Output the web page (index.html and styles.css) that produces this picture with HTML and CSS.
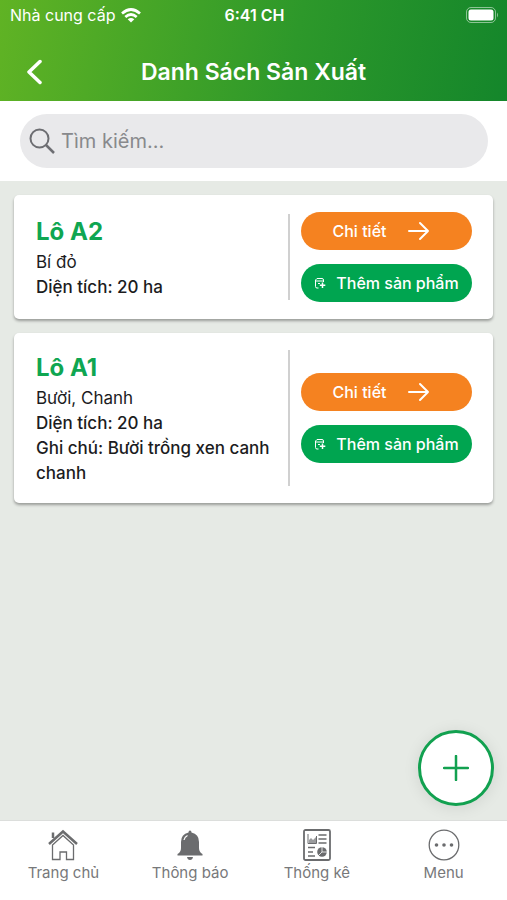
FILE: index.html
```html
<!DOCTYPE html>
<html lang="vi">
  <head>
    <meta charset="UTF-8" />
    <meta name="viewport" content="width=device-width, initial-scale=1.0" />
    <title>Danh Sách Sản Xuất</title>
    <link rel="stylesheet" href="styles.css">
  </head>
  <body>
    <!-- Icons used more than once -->
    <svg class="sprite" aria-hidden="true">
      <symbol id="arrow" viewBox="0 0 22 20">
        <path d="M1 10h19M12 2l8 8-8 8" fill="none" stroke="currentColor" stroke-width="2" stroke-linecap="round" stroke-linejoin="round" />
      </symbol>
      <symbol id="note_add" viewBox="0 0 12 12">
        <path d="M4.500 11H3Q1.500 11 1.500 9.500V3L3 1.500H8Q9.500 1.500 9.500 3V5M1.500 4H9.500M4 6.500H6" fill="none" stroke="currentColor" stroke-width="1" />
        <path d="M8.500 5.500v5.500M5.800 8.200h5.500" stroke="currentColor" stroke-width="1.500" />
      </symbol>
    </svg>

    <header>
      <div class="status">
        <div class="carrier">
          <span>Nhà cung cấp</span>
          <svg width="20" height="15" viewBox="0 0 20 15" fill="none" stroke="#fff" stroke-width="2.700">
            <path d="M1 5.500Q10-2.500 19 5.500M4.300 9Q10 4 15.700 9" />
            <path d="M10 14.500L6.700 11.300Q10 8.500 13.300 11.300Z" fill="#fff" stroke="none" />
          </svg>
        </div>
        <span class="time">6:41 CH</span>
        <svg class="battery" width="33" height="16" viewBox="0 0 33 16">
          <rect x="0.500" y="0.500" width="29" height="15" rx="4.500" fill="none" stroke="#fff" stroke-opacity="0.500" />
          <rect x="2.500" y="2.500" width="25" height="11" rx="2.500" fill="#fff" />
          <path d="M31 5.500Q33 8 31 10.500Z" fill="#fff" fill-opacity="0.500" />
        </svg>
      </div>
      <div class="titlebar">
        <button class="back" aria-label="Quay lại">
          <svg width="16" height="26" viewBox="0 0 16 26">
            <path d="M14 2.500L3 13l11 10.500" fill="none" stroke="#fff" stroke-width="3.500" stroke-linecap="round" stroke-linejoin="round" />
          </svg>
        </button>
        <h1>Danh Sách Sản Xuất</h1>
      </div>
    </header>

    <form class="search">
      <label class="search_box">
        <svg width="26" height="26" viewBox="0 0 26 26" fill="none" stroke="#6d6e72" stroke-width="2">
          <circle cx="10.500" cy="10.500" r="9" />
          <path d="M17 17l8 8" stroke-width="2.500" />
        </svg>
        <input type="text" placeholder="Tìm kiếm..." aria-label="Tìm kiếm" />
      </label>
    </form>

    <main>
      <article>
        <div class="info">
          <h2>Lô A2</h2>
          <p>Bí đỏ</p>
          <p class="strong">Diện tích: 20 ha</p>
        </div>
        <div class="actions">
          <button class="detail">Chi tiết <svg width="22" height="20"><use href="#arrow" /></svg></button>
          <button class="add"><svg width="12" height="12"><use href="#note_add" /></svg> Thêm sản phẩm</button>
        </div>
      </article>

      <article>
        <div class="info">
          <h2>Lô A1</h2>
          <p>Bười, Chanh</p>
          <p class="strong">Diện tích: 20 ha</p>
          <p class="strong">Ghi chú: Bười trồng xen canh chanh</p>
        </div>
        <div class="actions">
          <button class="detail">Chi tiết <svg width="22" height="20"><use href="#arrow" /></svg></button>
          <button class="add"><svg width="12" height="12"><use href="#note_add" /></svg> Thêm sản phẩm</button>
        </div>
      </article>

      <button class="fab" aria-label="Thêm lô">
        <svg width="26" height="26" viewBox="0 0 26 26">
          <path d="M13 1v24M1 13h24" stroke="#12a150" stroke-width="2.500" stroke-linecap="round" />
        </svg>
      </button>
    </main>

    <!-- Bottom navigation -->
    <nav>
      <a href="#">
        <svg width="32" height="32" viewBox="0 0 32 32" fill="none" stroke="#6b6c6e">
          <path d="M2 15L16 2.500 30 15" stroke-width="2.500" />
          <path d="M6 9V3.500" stroke-width="2.500" />
          <path d="M5.500 16L16 6.500 26.500 16V30.500H19.500V23H13V30.500H5.500Z" stroke-width="1.300" />
        </svg>
        Trang chủ
      </a>
      <a href="#">
        <svg width="32" height="32" viewBox="0 0 32 32" fill="#6b6c6e">
          <path d="M16 1.500q1.500 0 1.500 2Q25 5 25 13v6q0 4 3.500 6v1.500h-25V25Q7 23 7 19v-6q0-8 7.500-9.500 0-2 1.500-2Z" />
          <path d="M13 28h6q-.5 3-3 3t-3-3Z" />
          <path d="M10 11q.5-3 3.500-4.500" fill="none" stroke="#fff" stroke-width="1.200" />
        </svg>
        Thông báo
      </a>
      <a href="#">
        <svg width="32" height="32" viewBox="0 0 32 32" fill="none" stroke="#6b6c6e" stroke-width="1.500">
          <rect x="3" y="1" width="26" height="30" rx="1.500" stroke-width="1.800" />
          <path d="M17.500 6h8M17.500 10h8M17.500 14h8M7 18.500h7M7 23h5M7 27h7" />
          <path d="M7 5v9.500h8.500V7" stroke-width="1" />
          <path d="M8 14v-3l2-2 2 2 3-3v6Z" fill="#9a9b9d" stroke="none" />
          <circle cx="21" cy="23" r="4.800" fill="#6b6c6e" stroke="none" />
          <path d="M21 17.500V23l-4 4M21 23h5" stroke="#fff" stroke-width="0.800" />
        </svg>
        Thống kê
      </a>
      <a href="#">
        <svg width="32" height="32" viewBox="0 0 32 32" fill="#6b6c6e">
          <circle cx="16" cy="16" r="14.800" fill="none" stroke="#6b6c6e" stroke-width="1.300" />
          <circle cx="8.500" cy="16" r="1.800" />
          <circle cx="16" cy="16" r="1.800" />
          <circle cx="23.500" cy="16" r="1.800" />
        </svg>
        Menu
      </a>
    </nav>
  </body>
</html>
```

FILE: styles.css
```css
* {
  margin: 0;
  padding: 0;
  box-sizing: border-box;
}

body {
  min-height: 100vh;
  display: flex;
  flex-direction: column;
  font-family: Inter, 'Liberation Sans', sans-serif;
  color: #1c1c1e;
  background-color: white;
}

svg {
  display: block;
  flex-shrink: 0;
}

.sprite {
  display: none;
}

button {
  border: none;
  font-family: inherit;
  cursor: pointer;
}

/* Header */
header {
  background: linear-gradient(100deg, #60b324 0%, #2d982a 58%, #14862b 100%);
  color: white;
}

.status {
  display: grid;
  grid-template-columns: 1fr auto 1fr;
  align-items: center;
  height: 30px;
  padding: 0 8px 0 10px;
  font-size: 16px;
}

.carrier {
  display: flex;
  align-items: center;
  gap: 6px;
}

.time {
  font-weight: 600;
}

.battery {
  justify-self: end;
}

.titlebar {
  display: grid;
  grid-template-columns: 48px 1fr 48px;
  align-items: center;
  height: 71px;
  padding: 12px 10px 0;
}

.back {
  display: flex;
  justify-content: center;
  background-color: transparent;
}

h1 {
  text-align: center;
  font-size: 23px;
  font-weight: 600;
}

/* Search */
.search {
  padding: 13px 19px 13px 20px;
}

.search_box {
  display: flex;
  align-items: center;
  gap: 6px;
  height: 54px;
  padding: 0 20px 0 9px;
  border-radius: 27px;
  background-color: #e9e9eb;
}

.search_box input {
  flex: 1;
  min-width: 0;
  border: none;
  outline: none;
  background-color: transparent;
  font-family: inherit;
  font-size: 20px;
}

.search_box input::placeholder {
  color: #88898c;
}

/* List */
main {
  position: relative;
  flex: 1;
  display: flex;
  flex-direction: column;
  gap: 14px;
  padding: 14px;
  background-color: #e6eae5;
}

article {
  display: flex;
  align-items: center;
  gap: 11px;
  padding: 17px 21px 17px 22px;
  border-radius: 5px;
  background-color: white;
  box-shadow: 0 2px 3px #00000055;
}

.info {
  flex: 1;
  border-right: 2px solid #d0d0d0;
}

.info h2 {
  font-size: 24px;
  line-height: 36px;
  font-weight: 700;
  color: #0fa651;
}

.info p {
  font-size: 17px;
  line-height: 25px;
}

.info .strong {
  font-weight: 500;
}

.actions {
  display: flex;
  flex-direction: column;
  gap: 14px;
  width: 171px;
}

.actions button {
  display: flex;
  align-items: center;
  height: 38px;
  border-radius: 19px;
  font-size: 16px;
  font-weight: 500;
  white-space: nowrap;
  color: white;
}

.actions .detail {
  justify-content: center;
  gap: 22px;
  padding-right: 10px;
  background-color: #f58220;
}

.actions .add {
  justify-content: center;
  gap: 10px;
  background-color: #00a550;
}

.fab {
  position: absolute;
  right: 13px;
  bottom: 14px;
  display: flex;
  justify-content: center;
  align-items: center;
  width: 76px;
  height: 76px;
  border: 3px solid #12a150;
  border-radius: 50%;
  background-color: white;
  box-shadow: 0 2px 16px #00000018;
}

/* Bottom navigation */
nav {
  display: grid;
  grid-template-columns: repeat(4, 1fr);
  height: 80px;
  padding-top: 8px;
  border-top: 1px solid #dcdedc;
  background-color: white;
}

nav a {
  display: flex;
  flex-direction: column;
  align-items: center;
  gap: 2px;
  font-size: 15px;
  line-height: 20px;
  color: #77787a;
  text-decoration: none;
}
```
